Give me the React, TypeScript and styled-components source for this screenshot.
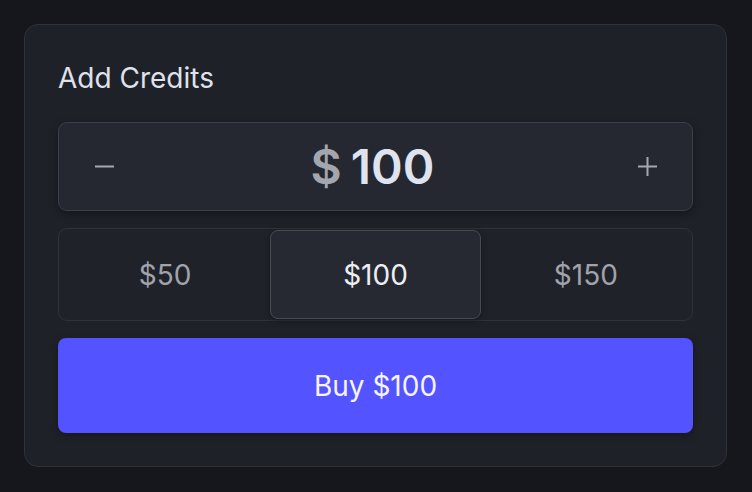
import * as React from 'react';
import styled, { createGlobalStyle } from 'styled-components';

const presets = [50, 100, 150];

export default function App() {
    const [amount, setAmount] = React.useState(100);

    return (
        <>
            <GlobalStyle />
            <Card>
                <Title>Add Credits</Title>
                <Stepper>
                    <StepButton aria-label={'decrease'} onClick={() => setAmount(Math.max(0, amount - 10))}>
                        <svg width={19} height={19} viewBox={'0 0 19 19'}>
                            <line x1={0} y1={9.5} x2={19} y2={9.5} stroke={'currentColor'} strokeWidth={2} />
                        </svg>
                    </StepButton>
                    <Amount>
                        <Currency>$</Currency>
                        <span>{amount}</span>
                    </Amount>
                    <StepButton aria-label={'increase'} onClick={() => setAmount(amount + 10)}>
                        <svg width={19} height={19} viewBox={'0 0 19 19'}>
                            <line x1={0} y1={9.5} x2={19} y2={9.5} stroke={'currentColor'} strokeWidth={2} />
                            <line x1={9.5} y1={0} x2={9.5} y2={19} stroke={'currentColor'} strokeWidth={2} />
                        </svg>
                    </StepButton>
                </Stepper>
                <PresetRow>
                    {presets.map((p) => (
                        <Preset key={p} $active={p === amount} onClick={() => setAmount(p)}>
                            ${p}
                        </Preset>
                    ))}
                </PresetRow>
                <BuyButton>Buy ${amount}</BuyButton>
            </Card>
        </>
    );
}

const GlobalStyle = createGlobalStyle`
    * {
        box-sizing: border-box;
    }
    body {
        margin: 0;
        padding: 24px;
        background: #15171d;
        font-family: Inter, "Noto Sans", sans-serif;
    }
`;

const Card = styled.div`
    width: 703px;
    display: flex;
    flex-direction: column;
    gap: 17px;
    padding: 36px 33px 33px;
    background: #1f2128;
    border: 1px solid #30323a;
    border-radius: 14px;
`;

const Title = styled.h2`
    margin: 0 0 10px;
    font-size: 28px;
    line-height: 34px;
    font-weight: 400;
    color: #dfe2ec;
`;

const Stepper = styled.div`
    height: 89px;
    display: flex;
    align-items: center;
    justify-content: space-between;
    padding: 0 26px;
    background: #252830;
    border: 1px solid #3c3f48;
    border-radius: 9px;
    box-shadow: 0 3px 8px rgba(0, 0, 0, 0.35);
`;

const StepButton = styled.button`
    width: 38px;
    height: 38px;
    display: flex;
    align-items: center;
    justify-content: center;
    padding: 0;
    border: none;
    background: transparent;
    color: #a5a8b2;
    cursor: pointer;
`;

const Amount = styled.div`
    display: flex;
    align-items: baseline;
    gap: 9px;
    font-size: 48px;
    line-height: 1;
    font-weight: 600;
    color: #dfe3ef;
    margin-left: -6px;
`;

const Currency = styled.span`
    color: #a3a6ae;
`;

const PresetRow = styled.div`
    height: 93px;
    display: grid;
    grid-template-columns: 1fr 1fr 1fr;
    padding: 1px;
    background: #20222a;
    border: 1px solid #2f323a;
    border-radius: 9px;
`;

const Preset = styled.button<{ $active: boolean }>`
    display: flex;
    align-items: center;
    justify-content: center;
    font-family: inherit;
    font-size: 28px;
    font-weight: 400;
    color: ${(p) => (p.$active ? '#eceef3' : '#a0a3ac')};
    background: ${(p) => (p.$active ? '#262931' : 'transparent')};
    border: 1px solid ${(p) => (p.$active ? '#464a53' : 'transparent')};
    border-radius: 8px;
    box-shadow: ${(p) => (p.$active ? '0 2px 6px rgba(0, 0, 0, 0.3)' : 'none')};
    cursor: pointer;
`;

const BuyButton = styled.button`
    height: 95px;
    border: none;
    border-radius: 8px;
    background: #5353ff;
    color: #f5f5ff;
    font-family: inherit;
    font-size: 28px;
    font-weight: 400;
    box-shadow: 0 3px 8px rgba(0, 0, 0, 0.3);
    cursor: pointer;
`;
